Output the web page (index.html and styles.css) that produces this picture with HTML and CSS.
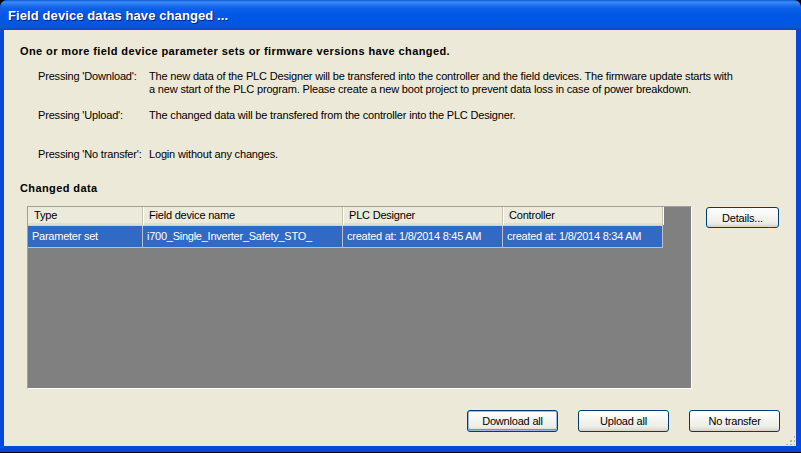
FILE: index.html
```html
<!DOCTYPE html>
<html>
<head>
<meta charset="utf-8">
<link rel="stylesheet" href="styles.css">
</head>
<body>
<div class="window">
  <div class="titlebar"><span class="title">Field device datas have changed ...</span></div>
  <div class="client">
    <div class="heading">One or more field device parameter sets or firmware versions have changed.</div>
    <div class="info">
      <div class="label">Pressing 'Download':</div>
      <div class="desc">The new data of the PLC Designer will be transfered into the controller and the field devices. The firmware update starts with<br>a new start of the PLC program. Please create a new boot project to prevent data loss in case of power breakdown.</div>
    </div>
    <div class="info upload">
      <div class="label">Pressing 'Upload':</div>
      <div class="desc">The changed data will be transfered from the controller into the PLC Designer.</div>
    </div>
    <div class="info notransfer">
      <div class="label">Pressing 'No transfer':</div>
      <div class="desc">Login without any changes.</div>
    </div>
    <div class="heading section">Changed data</div>
    <div class="datarow">
      <div class="grid">
        <div class="thead">
          <div class="th c1">Type</div>
          <div class="th c2">Field device name</div>
          <div class="th c3">PLC Designer</div>
          <div class="th c4">Controller</div>
        </div>
        <div class="tr selected">
          <div class="td c1">Parameter set</div>
          <div class="td c2">i700_Single_Inverter_Safety_STO_</div>
          <div class="td c3">created at: 1/8/2014 8:45 AM</div>
          <div class="td c4">created at: 1/8/2014 8:34 AM</div>
        </div>
      </div>
      <button class="btn details">Details...</button>
    </div>
    <div class="actions">
      <button class="btn default">Download all</button>
      <button class="btn">Upload all</button>
      <button class="btn">No transfer</button>
    </div>
    <div class="grip"></div>
  </div>
</div>
</body>
</html>
```

FILE: styles.css
```css
html, body {
  margin: 0;
  padding: 0;
  background: #000;
  width: 801px;
  height: 453px;
  overflow: hidden;
}
.window {
  width: 801px;
  height: 452px;
  box-sizing: border-box;
  background: #0848D8;
  border-radius: 7px 7px 0 0;
  display: flex;
  flex-direction: column;
  overflow: hidden;
}
.titlebar {
  height: 30px;
  flex: none;
  background: linear-gradient(to bottom, #0A5AD6 0px, #3C8CF6 2px, #2B7CF0 4px, #0C62E8 8px, #0058E6 14px, #0056E3 22px, #0A56DA 27px, #0847C8 30px);
  display: flex;
  align-items: center;
  padding-left: 8px;
  border-radius: 7px 7px 0 0;
}
.title {
  font-family: "Liberation Sans", Arial, sans-serif;
  font-weight: bold;
  font-size: 13px;
  color: #fff;
  text-shadow: 1px 1px 0 #0A1E80;
  letter-spacing: 0.1px;
  margin-top: 1px;
}
.client {
  flex: 1;
  margin: 0 5px 6px 4px;
  background: #ECE9D8;
  font-family: "Liberation Sans", Arial, sans-serif;
  font-size: 11px;
  line-height: 13px;
  color: #000;
  position: relative;
  padding-top: 15px;
}
.heading {
  font-weight: bold;
  margin-left: 16px;
  letter-spacing: 0.4px;
}
.section {
  margin-top: 21px;
}
.info {
  display: grid;
  grid-template-columns: 111px auto;
  margin-left: 34px;
  margin-top: 12px;
  letter-spacing: -0.17px;
}
.info.upload { margin-top: 13px; }
.info.notransfer { margin-top: 26px; }
.datarow {
  display: flex;
  align-items: flex-start;
  margin-top: 11px;
  margin-left: 23px;
}
.grid {
  width: 665px;
  height: 183px;
  box-sizing: border-box;
  background: #808080;
  border: 1px solid;
  border-color: #A0A0A0 #FFFFFF #FFFFFF #A0A0A0;
  overflow: hidden;
}
.thead, .tr {
  display: flex;
  width: 635px;
}
.thead {
  height: 18px;
  background: #EBEADB;
  border-bottom: 1px solid #D6D2C2;
  box-shadow: inset 0 -2px 0 #E2DECD;
}
.th {
  box-sizing: border-box;
  padding-left: 6px;
  line-height: 17px;
  border-right: 1px solid #C7C5B2;
  box-shadow: 1px 0 0 #FFFFFF;
  letter-spacing: -0.2px;
}
.tr {
  height: 21px;
  border-bottom: 1px solid #C0C0C0;
}
.tr.selected {
  background: #316AC5;
  color: #fff;
}
.td {
  box-sizing: border-box;
  padding-left: 4px;
  line-height: 21px;
  border-right: 1px solid #C0C0C0;
  letter-spacing: -0.25px;
  white-space: nowrap;
  overflow: hidden;
}
.c1 { width: 115px; }
.c2 { width: 200px; }
.c3 { width: 160px; }
.c4 { width: 160px; }
.btn {
  font-family: "Liberation Sans", Arial, sans-serif;
  font-size: 11px;
  color: #000;
  height: 21px;
  box-sizing: border-box;
  border: 1px solid #003C74;
  border-radius: 3px;
  background: linear-gradient(to bottom, #FFFFFF 0%, #F6F6F2 40%, #EDECE4 80%, #D6D0C5 100%);
  padding: 0;
  letter-spacing: -0.2px;
}
.details {
  width: 73px;
  margin-left: 14px;
  margin-top: 1px;
}
.actions {
  display: flex;
  justify-content: flex-end;
  gap: 20px;
  margin-top: 21px;
  margin-right: 16px;
}
.actions .btn {
  width: 91px;
  height: 22px;
}
.btn.default {
  box-shadow: inset 0 0 0 1px #98B8EA, inset 0 -1px 0 1px #6D8EE0;
}
.grip {
  position: absolute;
  right: 1px;
  bottom: 1px;
  width: 10px;
  height: 10px;
  background-image: radial-gradient(circle, #B5B2A2 1px, transparent 1.2px);
  background-size: 4px 4px;
  clip-path: polygon(100% 0, 100% 100%, 0 100%);
}
```
